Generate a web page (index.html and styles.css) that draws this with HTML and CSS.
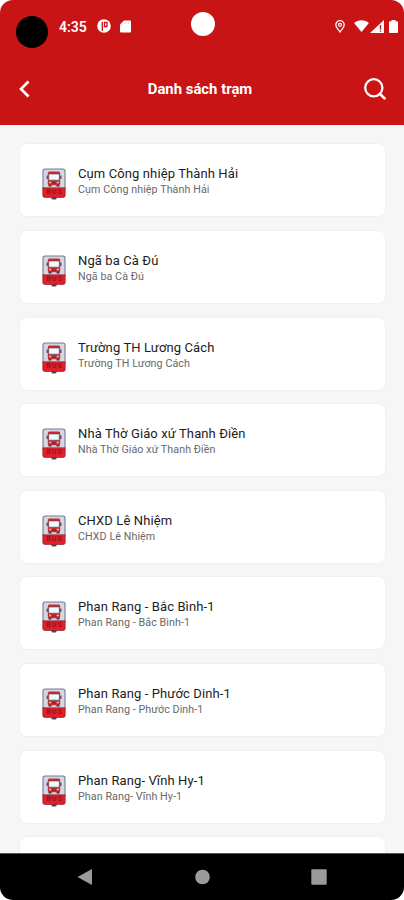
FILE: index.html
```
<!DOCTYPE html>
<html lang="vi">
<head>
<meta charset="utf-8">
<title>Danh sách trạm</title>
<link rel="stylesheet" href="styles.css">
</head>
<body>
<svg class="defs" width="0" height="0" aria-hidden="true">
  <symbol id="bus" viewBox="0 0 24 32">
    <rect x="9.500" y="28" width="5" height="3.500" rx="1.200" fill="#454b5e"/>
    <rect x="1" y="1" width="22" height="21" rx="2.200" fill="#d5d8e4" stroke="#747b8d" stroke-width="1.100"/>
    <path d="M.8 19.800h22.400V27.500a2 2 0 0 1-2 2H2.800a2 2 0 0 1-2-2z" fill="#e21f28" stroke="#8c2735" stroke-width=".7"/>
    <path d="M6.500 16.500h3v2h-3zM14.500 16.500h3v2h-3z" fill="#39323c"/>
    <path d="M4.500 7.500h2V11h-2zM17.500 7.500h2V11h-2z" fill="#625265"/>
    <rect x="5.800" y="3.500" width="12.400" height="13.800" rx="1.500" fill="#c42d30"/>
    <rect x="6.700" y="6" width="10.600" height="6.200" rx=".5" fill="#eff9ff" stroke="#4a4656" stroke-width=".6"/>
    <path d="M7.200 14.500h2M14.800 14.500h2" stroke="#f7c3b8" stroke-width="1.300"/>
    <path d="M10 15h4" stroke="#662731"/>
  </symbol>
</svg>
<div class="screen">
  <header class="top">
    <div class="status">
      <span class="lens"></span>
      <span class="time">4:35</span>
      <svg class="app" viewBox="0 0 14 14"><circle cx="7" cy="7" r="6.800" fill="#fff"/><path d="M5.300 12V3M7.500 3.500H10V7.500H7.500z" fill="none" stroke="#c81414" stroke-width="1.300"/></svg>
      <svg class="sd" viewBox="0 0 11 13"><path d="M4 .5h6a1 1 0 0 1 1 1v10a1 1 0 0 1-1 1H1a1 1 0 0 1-1-1v-7z" fill="#fff"/><path d="M4.200 2v2M6.300 2v2M8.400 2v2" stroke="#f5c4c4" stroke-width=".7"/></svg>
      <span class="camera"></span>
      <svg class="pin" viewBox="0 0 10 13"><path d="M5 12C3.500 9.500.8 7.500.8 4.900a4.200 4.200 0 0 1 8.400 0C9.200 7.500 6.500 9.500 5 12z" fill="none" stroke="#fff" stroke-width="1.300"/><circle cx="5" cy="4.800" r="1.500" fill="none" stroke="#fff" stroke-width="1.200"/></svg>
      <svg class="wifi" viewBox="0 0 16 13"><path d="M0 3.200C4.500-.6 11.500-.6 16 3.200L8 13z" fill="#fff"/></svg>
      <svg class="signal" viewBox="0 0 14 13"><path d="M14 0v13H0z" fill="#fff"/><path d="M10.500 5v4.500M10.500 10.500v1.300" stroke="#c81414" stroke-width="1.400"/></svg>
      <svg class="battery" viewBox="0 0 9 13"><path d="M2.500 0h4v1.300H8a1 1 0 0 1 1 1V12a1 1 0 0 1-1 1H1a1 1 0 0 1-1-1V2.300a1 1 0 0 1 1-1h1.500z" fill="#fff"/></svg>
    </div>
    <div class="bar">
      <svg class="back" viewBox="0 0 12 18"><path d="M10.500 1.500L3 9l7.500 7.500" fill="none" stroke="#fff" stroke-width="2.700"/></svg>
      <h1>Danh sách trạm</h1>
      <svg class="search" viewBox="0 0 22 22"><circle cx="9.800" cy="9.800" r="8.600" fill="none" stroke="#fff" stroke-width="2.300"/><path d="M16 16l5.200 5" stroke="#fff" stroke-width="2.500"/></svg>
    </div>
  </header>
  <main class="list">
    <article class="card"><span class="bus"><svg><use href="#bus"/></svg><b>BUS</b></span><div><h2>Cụm Công nhiệp Thành Hải</h2><p>Cụm Công nhiệp Thành Hải</p></div></article>
    <article class="card"><span class="bus"><svg><use href="#bus"/></svg><b>BUS</b></span><div><h2>Ngã ba Cà Đú</h2><p>Ngã ba Cà Đú</p></div></article>
    <article class="card"><span class="bus"><svg><use href="#bus"/></svg><b>BUS</b></span><div><h2>Trường TH Lương Cách</h2><p>Trường TH Lương Cách</p></div></article>
    <article class="card"><span class="bus"><svg><use href="#bus"/></svg><b>BUS</b></span><div><h2>Nhà Thờ Giáo xứ Thanh Điền</h2><p>Nhà Thờ Giáo xứ Thanh Điền</p></div></article>
    <article class="card"><span class="bus"><svg><use href="#bus"/></svg><b>BUS</b></span><div><h2>CHXD Lê Nhiệm</h2><p>CHXD Lê Nhiệm</p></div></article>
    <article class="card"><span class="bus"><svg><use href="#bus"/></svg><b>BUS</b></span><div><h2>Phan Rang - Bắc Bình-1</h2><p>Phan Rang - Bắc Bình-1</p></div></article>
    <article class="card"><span class="bus"><svg><use href="#bus"/></svg><b>BUS</b></span><div><h2>Phan Rang - Phước Dinh-1</h2><p>Phan Rang - Phước Dinh-1</p></div></article>
    <article class="card"><span class="bus"><svg><use href="#bus"/></svg><b>BUS</b></span><div><h2>Phan Rang- Vĩnh Hy-1</h2><p>Phan Rang- Vĩnh Hy-1</p></div></article>
    <article class="card"></article>
  </main>
  <nav class="nav">
    <svg viewBox="0 0 16 16"><path d="M15 0v16L.5 8z" fill="#9b9b9b"/></svg>
    <svg viewBox="0 0 16 16"><circle cx="8.500" cy="8" r="7.300" fill="#9b9b9b"/></svg>
    <svg viewBox="0 0 16 16"><rect x=".3" y=".3" width="15.400" height="15.400" rx="1" fill="#9b9b9b"/></svg>
  </nav>
</div>
</body>
</html>
```
FILE: styles.css
```
* { box-sizing: border-box; }
body { margin: 0; background: #fff; font-family: Roboto, "Noto Sans", sans-serif; }
h1, h2, p { margin: 0; }
svg { display: block; flex: none; }
.defs { position: absolute; }
.screen { width: 404px; height: 900px; display: flex; flex-direction: column; overflow: hidden; border-radius: 13px; background: #f6f6f6; }
.top { flex: none; height: 125px; background: #c81414; color: #fff; }
.status { position: relative; height: 52px; padding: 0 6px 0 16px; display: flex; align-items: center; }
.lens { width: 32px; height: 32px; margin-top: 11px; border-radius: 50%; background: #000; }
.time { width: 29px; margin: 1px 9px 0 11px; font-size: 14px; font-weight: 600; line-height: 16px; }
.app { width: 14px; height: 14px; }
.sd { width: 11px; height: 13px; margin-left: 9px; }
.camera { position: absolute; left: 191px; top: 12px; width: 24px; height: 24px; border-radius: 50%; background: #fff; }
.pin { width: 10px; height: 13px; margin-left: auto; }
.wifi { width: 15px; height: 12px; margin-left: 9px; }
.signal { width: 14px; height: 13px; margin-left: 1px; }
.battery { width: 9px; height: 13px; margin-left: 5px; }
.bar { height: 73px; display: flex; align-items: center; justify-content: space-between; padding: 0 18px 0 18px; }
.back { width: 12px; height: 18px; }
.bar h1 { margin: 1px 0 0 6px; font-size: 14.9px; font-weight: 700; line-height: 20px; }
.search { width: 22px; height: 22px; }
.list { flex: 1; min-height: 0; overflow: hidden; display: flex; flex-direction: column; gap: 12.6px; padding: 18.4px 18px 0 19px; }
.card { flex: none; height: 74px; display: flex; align-items: center; gap: 12px; padding: 8px 22px 0 22px; background: #fff; border: 1px solid #f0f0f0; border-radius: 8px; }
.bus { position: relative; width: 24px; height: 32px; }
.bus svg { width: 24px; height: 32px; }
.bus b { position: absolute; left: 0; top: 20px; width: 24px; padding-left: 1px; text-align: center; font-size: 7px; line-height: 9px; letter-spacing: 1px; color: #8e1625; }
.card div { height: 36px; }
.card h2 { font-size: 13px; font-weight: 400; line-height: 16px; letter-spacing: .11px; color: #1c1c1c; white-space: nowrap; }
.card p { font-size: 10.7px; line-height: 16px; letter-spacing: .08px; color: #686868; white-space: nowrap; }
.nav { flex: none; height: 47px; background: #000; border-top: 1px solid #555; display: flex; justify-content: space-between; align-items: center; padding: 0 77px; }
.nav svg { width: 16px; height: 16px; }
```
